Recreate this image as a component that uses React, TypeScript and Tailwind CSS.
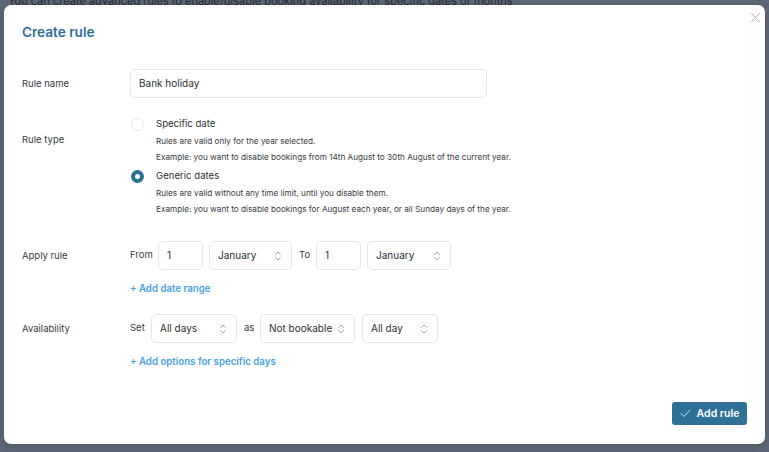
import React from "react";

const font = { fontFamily: "Inter, 'Noto Sans', sans-serif" };

function UpDown() {
  return (
    <svg width="8" height="12" viewBox="0 0 8 12" fill="none" stroke="#a3a9b3" strokeWidth="1" strokeLinecap="round" strokeLinejoin="round">
      <path d="M1.5 4.5 L4 2 L6.5 4.5" />
      <path d="M1.5 7.5 L4 10 L6.5 7.5" />
    </svg>
  );
}

function Select({ value, width }: { value: string; width: string }) {
  return (
    <div className={`${width} h-[29px] border border-[#e3e6eb] rounded-[5px] bg-white flex items-center justify-between pl-[8px] pr-[9px] text-[10px] text-[#2b2f33] whitespace-nowrap`}>
      <span>{value}</span>
      <UpDown />
    </div>
  );
}

function NumInput({ value }: { value: string }) {
  return (
    <div className="w-[45px] h-[29px] border border-[#e3e6eb] rounded-[5px] bg-white flex items-center pl-[8px] text-[10px] text-[#2b2f33]">
      {value}
    </div>
  );
}

function Radio({ checked }: { checked?: boolean }) {
  return checked ? (
    <span className="w-[13px] h-[13px] rounded-full bg-[#2c6e94] flex items-center justify-center shrink-0">
      <span className="w-[5px] h-[5px] rounded-full bg-white" />
    </span>
  ) : (
    <span className="w-[13px] h-[13px] rounded-full border border-[#e4e7ec] bg-white shrink-0" />
  );
}

function RadioOption({ checked, title, lines }: { checked?: boolean; title: string; lines: string[] }) {
  return (
    <div className="flex">
      <div className="h-[18px] flex items-center pl-[1px]">
        <Radio checked={checked} />
      </div>
      <div className="ml-[12px]">
        <div className="h-[18px] leading-[18px] text-[9.6px] text-[#2b2f33]">{title}</div>
        {lines.map((l) => (
          <div key={l} className="h-[16px] leading-[16px] text-[8.2px] text-[#373b40]">
            {l}
          </div>
        ))}
      </div>
    </div>
  );
}

export default function App() {
  return (
    <div className="relative w-[769px] h-[452px] overflow-hidden bg-[#5c6777]" style={font}>
      <p className="mt-[-7px] pl-[8px] text-[11px] text-[#262b33] whitespace-nowrap">
        You can create advanced rules to enable/disable booking availability for specific dates or months
      </p>

      <div className="absolute top-[5px] left-[4px] w-[761px] h-[439px] bg-white rounded-[7px] shadow-[0_2px_8px_rgba(0,0,0,0.15)] px-[18px] pt-[18px]">
        <button className="absolute top-[7px] right-[5px] w-[10px] h-[10px] flex items-center justify-center">
          <svg width="9" height="9" viewBox="0 0 9 9" stroke="#b4b8bd" strokeWidth="1" strokeLinecap="round">
            <path d="M0.5 0.5 L8.5 8.5 M8.5 0.5 L0.5 8.5" />
          </svg>
        </button>

        <h1 className="text-[13.6px] leading-[18px] font-semibold text-[#2d6f9a]">Create rule</h1>

        <div className="grid grid-cols-[108px_1fr] mt-[28px] text-[#363a3f]">
          {/* Rule name */}
          <div className="h-[29px] pt-[1px] flex items-center text-[9.5px]">Rule name</div>
          <div className="w-[357px] h-[29px] border border-[#e3e6eb] rounded-[5px] flex items-center pl-[8px] text-[10px] text-[#2b2f33]">
            Bank holiday
          </div>

          {/* Rule type */}
          <div className="pt-[33px] text-[9.5px] leading-[18px]">Rule type</div>
          <div className="pt-[17px] flex flex-col gap-[2px]">
            <RadioOption
              title="Specific date"
              lines={[
                "Rules are valid only for the year selected.",
                "Example: you want to disable bookings from 14th August to 30th August of the current year.",
              ]}
            />
            <RadioOption
              checked
              title="Generic dates"
              lines={[
                "Rules are valid without any time limit, until you disable them.",
                "Example: you want to disable bookings for August each year, or all Sunday days of the year.",
              ]}
            />
          </div>

          {/* Apply rule */}
          <div className="mt-[24px] h-[29px] pt-[1px] flex items-center text-[9.5px]">Apply rule</div>
          <div className="mt-[24px]">
            <div className="flex items-center h-[29px] text-[9.5px]">
              <span className="w-[28px]">From</span>
              <NumInput value="1" />
              <div className="ml-[6px]">
                <Select value="January" width="w-[83px]" />
              </div>
              <span className="ml-[7px] w-[17px]">To</span>
              <NumInput value="1" />
              <div className="ml-[6px]">
                <Select value="January" width="w-[84px]" />
              </div>
            </div>
            <div className="mt-[11px] h-[16px] leading-[16px] text-[9.7px] font-semibold text-[#47a3e0]">+ Add date range</div>
          </div>

          {/* Availability */}
          <div className="mt-[17px] h-[29px] pt-[1px] flex items-center text-[9.5px]">Availability</div>
          <div className="mt-[17px]">
            <div className="flex items-center h-[29px] text-[9.5px]">
              <span className="w-[21px]">Set</span>
              <Select value="All days" width="w-[86px]" />
              <span className="ml-[7px] w-[16px]">as</span>
              <Select value="Not bookable" width="w-[95px]" />
              <div className="ml-[7px]">
                <Select value="All day" width="w-[76px]" />
              </div>
            </div>
            <div className="mt-[11px] h-[16px] leading-[16px] text-[9.7px] font-semibold text-[#47a3e0]">+ Add options for specific days</div>
          </div>
        </div>

        <div className="flex justify-end mt-[32px]">
          <button className="w-[75px] h-[23px] rounded-[3px] bg-[#2f7096] flex items-center justify-center gap-[6px] text-white text-[10.5px] font-semibold">
            <svg width="11" height="9" viewBox="0 0 11 9" fill="none" stroke="#cfe0ea" strokeWidth="1" strokeLinecap="round" strokeLinejoin="round">
              <path d="M1 4.5 L4 7.5 L10 1" />
            </svg>
            Add rule
          </button>
        </div>
      </div>
    </div>
  );
}
